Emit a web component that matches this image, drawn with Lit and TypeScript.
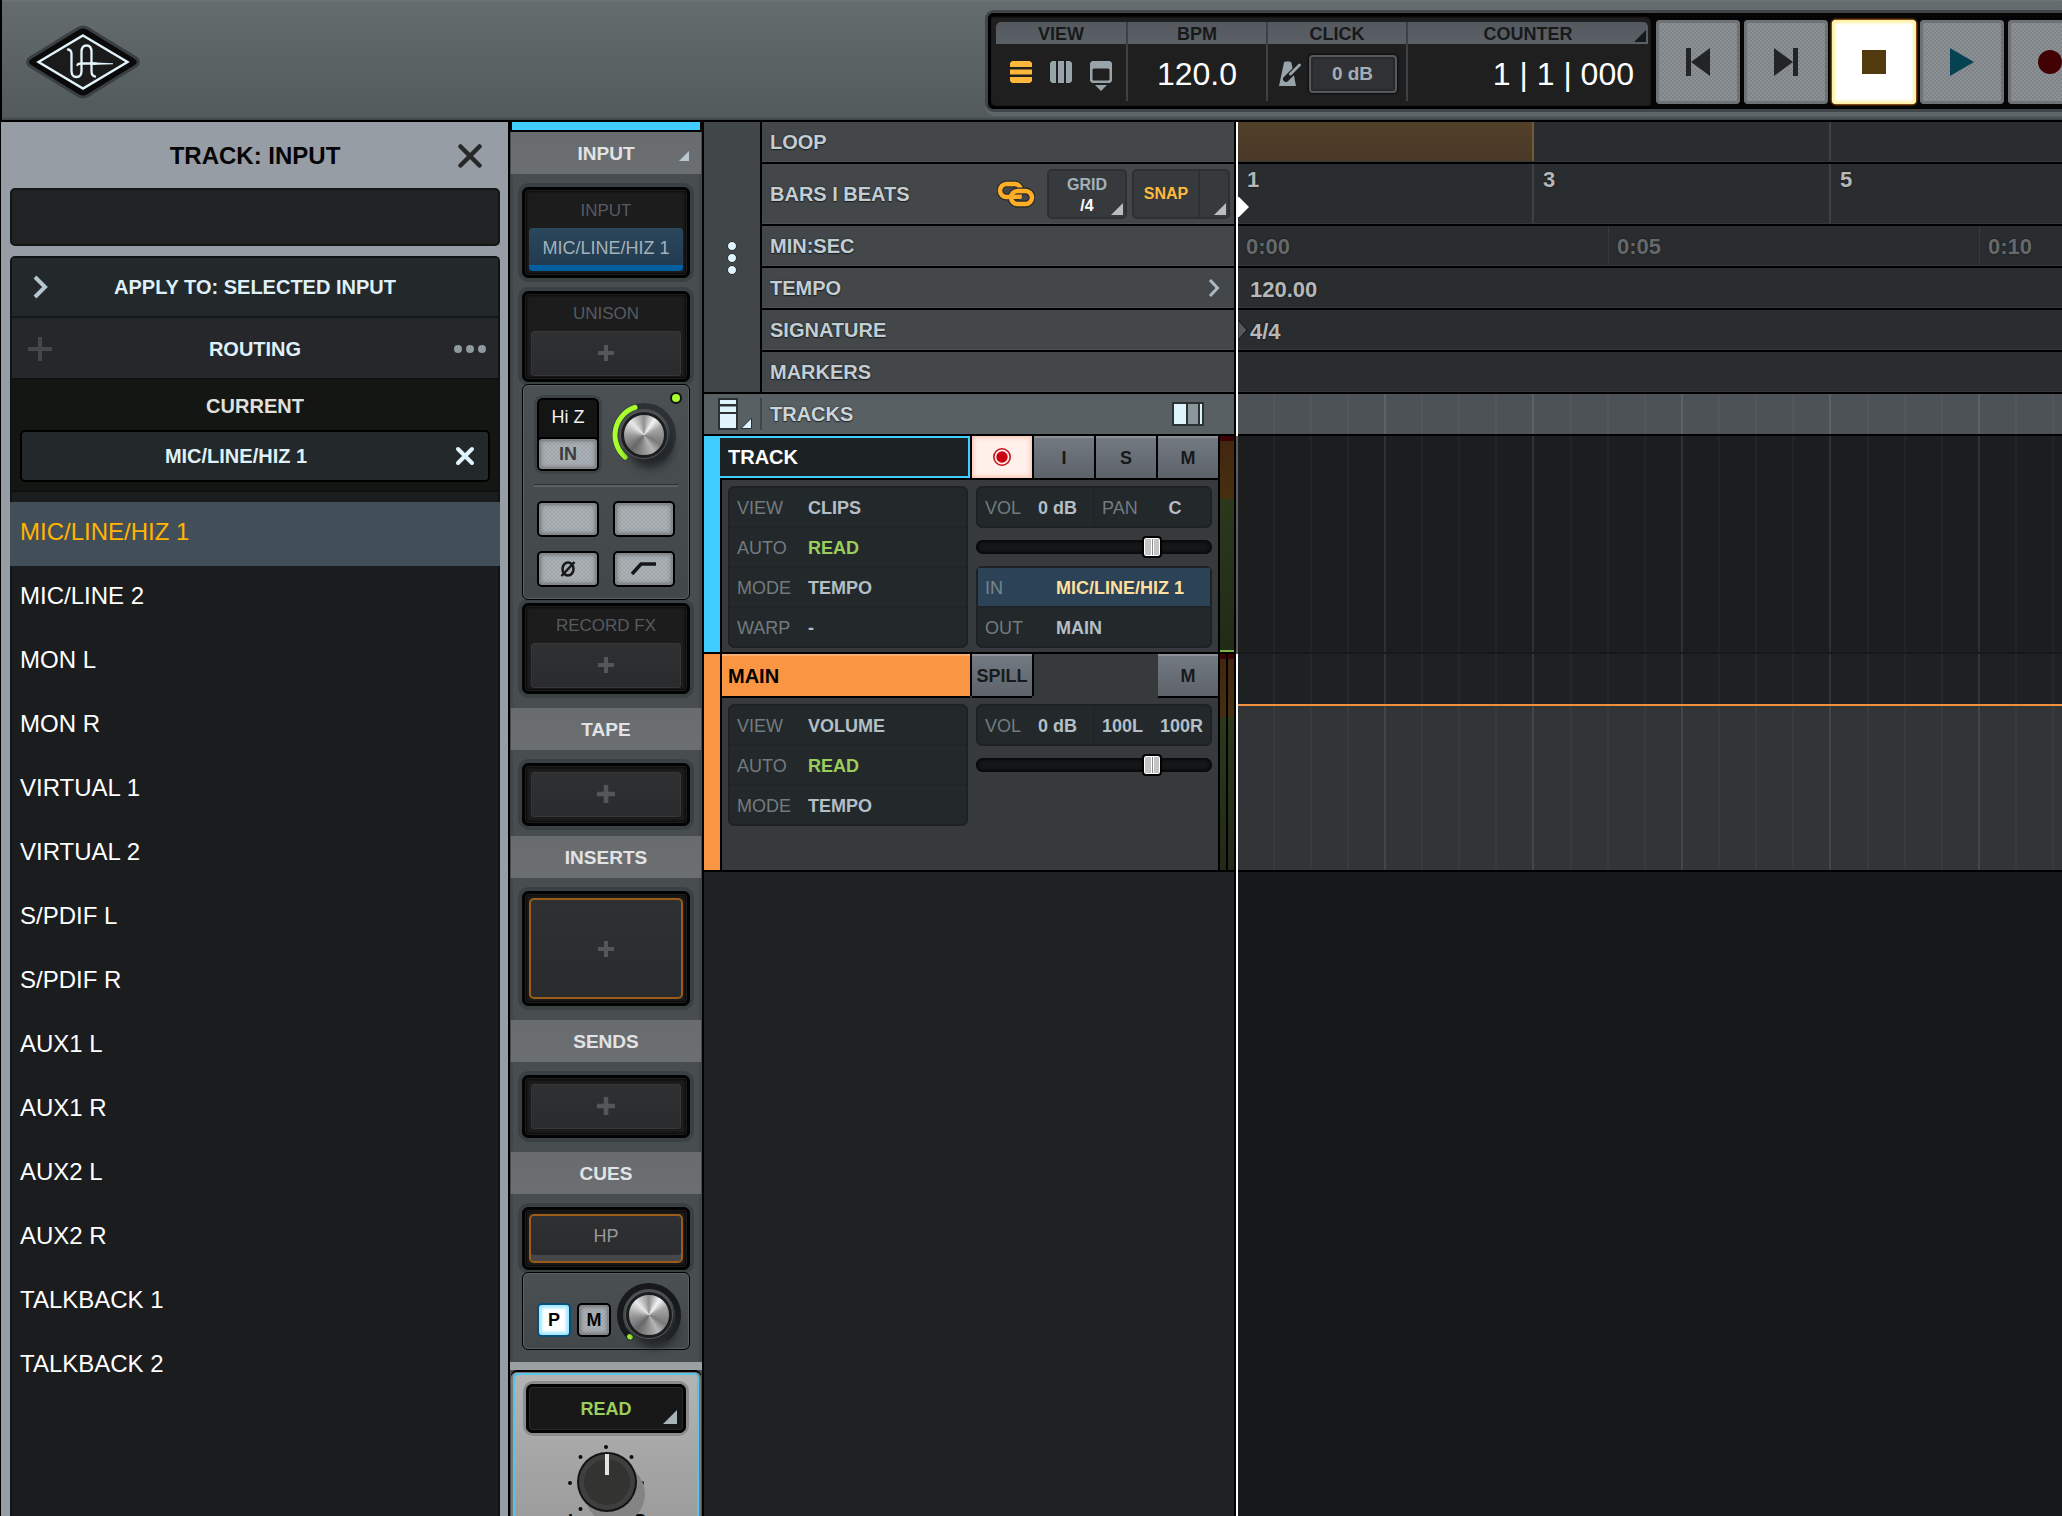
import { LitElement, html, css, nothing } from "lit";
import { customElement, property } from "lit/decorators.js";
import { classMap } from "lit/directives/class-map.js";

const base = css`
  :host {
    display: block;
    box-sizing: border-box;
    font-family: "Liberation Sans", Arial, Helvetica, sans-serif;
  }
  *,
  *::before,
  *::after {
    box-sizing: border-box;
  }
  button,
  input {
    font: inherit;
    color: inherit;
    background: none;
    border: 0;
    border-radius: 0;
    margin: 0;
    padding: 0;
    outline: none;
  }
  button {
    cursor: pointer;
  }
  svg {
    display: block;
    flex: none;
  }
`;

const metal = css`
  .metal {
    display: flex;
    align-items: center;
    justify-content: center;
    background:
      linear-gradient(#a5adb3, #a5adb3) center top / 14px 3px no-repeat,
      linear-gradient(#a5adb3, #a5adb3) center bottom / 14px 3px no-repeat,
      repeating-conic-gradient(#a0a5a9 0 25%, #abb3b9 0 50%) 0 0 / 4px 4px;
    border: 2px solid #000;
    border-radius: 5px;
    box-shadow: inset 0 0 0 2px #85888b, inset 0 0 4px 2px #777b7e;
    color: #2f3133;
    font-weight: 700;
    font-size: 18px;
    line-height: 20px;
  }
`;

/* ---------- Header ---------- */

@customElement("ua-header")
class UaHeader extends LitElement {
  static styles = [
    base,
    css`
      .bar {
        display: flex;
        align-items: flex-start;
        height: 122px;
        overflow: hidden;
        border-left: 2px solid #000;
        border-bottom: 2px solid #000;
        background: linear-gradient(#72797b 0, #656c6e 2px, #535a5c 117px, #3c4244 120px);
      }
      .logo {
        margin: 24px 0 0 22px;
      }
      .gap {
        flex: 0 0 846px;
      }
      .console {
        display: flex;
        flex: none;
        margin-top: 13px;
        height: 96px;
        border-radius: 6px;
        background: #050505;
        box-shadow: 0 0 0 3px #3f4548, 0 4px 0 3px #5f6669;
      }
      .display {
        display: flex;
        padding: 9px 4px 8px 8px;
        border-radius: 6px;
        background: #1f1f20;
        box-shadow: inset 0 3px 2px 1px #000, inset 2px -2px 1px 1px #000;
        margin-right: 4px;
      }
      .cell {
        display: flex;
        flex-direction: column;
        width: 138px;
        margin-right: 2px;
        box-shadow: 2px 0 0 #3c4144;
      }
      .cell.view {
        width: 130px;
      }
      .cell.counter {
        width: 240px;
        margin-right: 0;
        box-shadow: none;
      }
      .cap {
        display: flex;
        align-items: center;
        justify-content: center;
        height: 22px;
        padding-top: 2px;
        background: linear-gradient(#54595f, #5b6067);
        color: #17191b;
        font-size: 18px;
        line-height: 20px;
        font-weight: 700;
      }
      .view .cap {
        border-radius: 5px 0 0 0;
      }
      .counter .cap {
        position: relative;
        border-radius: 0 5px 0 0;
      }
      .corner {
        position: absolute;
        right: 2px;
        bottom: 2px;
      }
      .val {
        display: flex;
        align-items: center;
        justify-content: center;
        gap: 7px;
        height: 56px;
        padding-top: 4px;
        color: #fff;
        font-size: 32px;
        line-height: 36px;
      }
      .view .val {
        align-items: flex-start;
        gap: 18px;
        padding-top: 17px;
      }
      .view .val button {
        width: 22px;
        height: 31px;
        display: flex;
        align-items: flex-start;
      }
      .counter .val {
        justify-content: flex-end;
        padding-right: 14px;
      }
      .db {
        width: 88px;
        height: 38px;
        border: 2px solid #55595c;
        border-radius: 4px;
        background: #2f3133;
        box-shadow: 0 0 2px 1px #0c0c0c, inset 0 0 0 2px #27292b;
        color: #a3adb3;
        font-size: 19px;
        line-height: 20px;
        font-weight: 700;
      }
      .transport {
        display: flex;
        gap: 4px;
        padding-top: 7px;
      }
      .key {
        display: flex;
        align-items: center;
        justify-content: center;
        width: 84px;
        height: 84px;
        border-radius: 4px;
        background:
          linear-gradient(#999fa3, #999fa3) center top / 16px 3px no-repeat,
          linear-gradient(#999fa3, #999fa3) center bottom / 16px 3px no-repeat,
          repeating-conic-gradient(#7e8387 0 25%, #8b9195 0 50%) 0 0 / 4px 4px;
        box-shadow: inset 0 0 0 3px #6f7376, inset 0 2px 0 0 #8e9296;
      }
      .key.on {
        background: #fff;
        box-shadow: inset 0 0 3px 3px #fff2a8, 0 0 2px 1px #b0601a;
      }
    `,
  ];

  render() {
    return html`
      <header class="bar">
        <svg class="logo" width="118" height="76" viewBox="0 0 118 76" role="img" aria-label="Universal Audio">
          <path d="M54 4.500Q59 1.500 64 4.500L112 34Q117 38 112 42L64 71.500Q59 74.500 54 71.500L6 42Q1 38 6 34Z" fill="#0a0a0a" stroke="#3a4042" stroke-width="3" />
          <path d="M59 11.500L103.500 38L59 64.500L14.500 38Z" fill="#1b1b1b" stroke="#e3f4fb" stroke-width="2.400" />
          <g fill="none" stroke="#e3f4fb" stroke-width="2.300" stroke-linecap="round">
            <path d="M44 25.500Q47.500 26 47.500 30V47Q47.500 53 52.500 53Q57.500 53 57.500 47V28Q57.500 21.500 62.500 21.500Q67.500 21.500 67.500 28V47Q67.500 52 71 52.500" />
            <path d="M53.500 41Q54 39.500 58 39.500H72" />
          </g>
          <path d="M66 38.300L89 39.300V40.200L66 41Z" fill="#e3f4fb" />
        </svg>
        <div class="gap"></div>
        <div class="console">
          <div class="display">
            <div class="cell view">
              <div class="cap">VIEW</div>
              <div class="val">
                <button aria-label="Tracks view">
                  <svg width="22" height="22" viewBox="0 0 22 22">
                    <path d="M2 0H20L22 2V6H0V2ZM0 8.500H22V13.500H0ZM0 16H22V20L20 22H2L0 20Z" fill="#ffb83c" />
                  </svg>
                </button>
                <button aria-label="Mixer view">
                  <svg width="22" height="22" viewBox="0 0 22 22">
                    <path d="M2 0H6V22H2L0 20V2ZM8 0H14V22H8ZM16 0H20L22 2V20L20 22H16Z" fill="#98a4aa" />
                  </svg>
                </button>
                <button aria-label="Window view">
                  <svg width="22" height="31" viewBox="0 0 22 31">
                    <path d="M2 0H20L22 2V20L20 22H2L0 20V2ZM2.500 9V18Q2.500 19.500 4 19.500H18Q19.500 19.500 19.500 18V9Q19.500 7.500 18 7.500H4Q2.500 7.500 2.500 9Z" fill="#98a4aa" fill-rule="evenodd" />
                    <path d="M5 24H17L11 30Z" fill="#98a4aa" />
                  </svg>
                </button>
              </div>
            </div>
            <div class="cell">
              <div class="cap">BPM</div>
              <div class="val">120.0</div>
            </div>
            <div class="cell">
              <div class="cap">CLICK</div>
              <div class="val">
                <svg width="24" height="26" viewBox="0 0 24 26">
                  <path d="M6 1.500Q6.500 0.500 8 0.500H11.500Q13 0.500 13.500 2L18 25H1Z" fill="#98a4aa" />
                  <path d="M8 18L22 4" stroke="#1c1c1d" stroke-width="6" stroke-linecap="round" />
                  <path d="M12.500 13L21.500 4" stroke="#98a4aa" stroke-width="3" stroke-linecap="round" />
                </svg>
                <button class="db">0 dB</button>
              </div>
            </div>
            <div class="cell counter">
              <div class="cap">
                COUNTER
                <svg class="corner" width="12" height="12" viewBox="0 0 12 12"><path d="M12 0V12H0Z" fill="#17191b" /></svg>
              </div>
              <div class="val">1 | 1 | 000</div>
            </div>
          </div>
          <div class="transport">
            <button class="key" aria-label="Previous">
              <svg width="28" height="28" viewBox="0 0 28 28"><path d="M2 0H7V14L26 0V28L7 14V28H2Z" fill="#222426" /></svg>
            </button>
            <button class="key" aria-label="Next">
              <svg width="28" height="28" viewBox="0 0 28 28"><path d="M26 0H21V14L2 0V28L21 14V28H26Z" fill="#222426" /></svg>
            </button>
            <button class="key on" aria-label="Stop">
              <svg width="24" height="24" viewBox="0 0 24 24"><path d="M0 0H24V24H0Z" fill="#503a0e" /></svg>
            </button>
            <button class="key" aria-label="Play">
              <svg width="24" height="28" viewBox="0 0 24 28"><path d="M0 0L24 14L0 28Z" fill="#064352" /></svg>
            </button>
            <button class="key" aria-label="Record">
              <svg width="24" height="24" viewBox="0 0 24 24"><circle cx="12" cy="12" r="12" fill="#420203" /></svg>
            </button>
          </div>
        </div>
      </header>
    `;
  }
}

/* ---------- Routing browser ---------- */

const INPUTS = [
  "MIC/LINE/HIZ 1",
  "MIC/LINE 2",
  "MON L",
  "MON R",
  "VIRTUAL 1",
  "VIRTUAL 2",
  "S/PDIF L",
  "S/PDIF R",
  "AUX1 L",
  "AUX1 R",
  "AUX2 L",
  "AUX2 R",
  "TALKBACK 1",
  "TALKBACK 2",
];

@customElement("ua-browser")
class UaBrowser extends LitElement {
  @property() selected = INPUTS[0];

  static styles = [
    base,
    css`
      :host {
        display: flex;
        border-left: 1px solid #000;
        border-right: 2px solid #000;
        min-height: 0;
      }
      .panel {
        flex: 1;
        display: flex;
        flex-direction: column;
        padding: 0 8px 0 9px;
        background: #979da4;
        overflow: hidden;
      }
      .row {
        display: grid;
        grid-template-columns: 56px 1fr 56px;
        align-items: center;
        justify-items: center;
        font-size: 20px;
        line-height: 24px;
        font-weight: 700;
        color: #dff0f8;
      }
      .title {
        height: 66px;
        flex: none;
        padding-top: 2px;
        font-size: 24px;
        line-height: 28px;
        color: #050505;
      }
      .title h1 {
        margin: 0;
        font: inherit;
      }
      .title button {
        padding-right: 4px;
      }
      .search {
        flex: none;
        width: 100%;
        height: 58px;
        margin-bottom: 10px;
        padding: 0 12px;
        background: #212224;
        border: 2px solid #121715;
        border-radius: 5px;
        color: #fff;
        font-size: 24px;
      }
      .box {
        flex: 1;
        border: 2px solid #101315;
        border-bottom: 0;
        border-radius: 5px 5px 0 0;
        background: #1b1c1e;
      }
      .apply {
        height: 60px;
        width: 100%;
        background: #23282b;
        border-bottom: 2px solid #14181a;
      }
      .routing {
        height: 62px;
        padding-top: 2px;
        background: #25272b;
        border-bottom: 2px solid #0e1110;
      }
      .current {
        height: 112px;
        padding: 14px 8px 10px;
        background: #141614;
        border-bottom: 2px solid #0e100f;
        color: #e0e0de;
        font-size: 20px;
        line-height: 24px;
        font-weight: 700;
        text-align: center;
      }
      .chip {
        display: grid;
        grid-template-columns: 1fr 46px;
        align-items: center;
        justify-items: center;
        height: 52px;
        margin-top: 12px;
        border: 2px solid #000;
        border-radius: 5px;
        background: #23282b;
        color: #dff0f8;
      }
      .chip span {
        padding-left: 8px;
      }
      ul {
        list-style: none;
        margin: 10px -2px 0;
        padding: 0;
      }
      .item {
        display: block;
        width: 100%;
        height: 64px;
        padding: 0 10px 5px;
        text-align: left;
        color: #fff;
        font-size: 24px;
        line-height: 28px;
      }
      .item.on {
        background: #434f58;
        color: #ffb400;
      }
    `,
  ];

  render() {
    return html`
      <section class="panel">
        <div class="row title">
          <span></span>
          <h1>TRACK: INPUT</h1>
          <button aria-label="Close">
            <svg width="26" height="24" viewBox="0 0 26 24"><path d="M3.500 2.500L22.500 21.500M22.500 2.500L3.500 21.500" stroke="#26282a" stroke-width="4.500" stroke-linecap="round" /></svg>
          </button>
        </div>
        <input class="search" type="text" aria-label="Search inputs" />
        <div class="box">
          <button class="row apply">
            <svg width="18" height="24" viewBox="0 0 18 24"><path d="M4 2L14 12L4 22" fill="none" stroke="#b5c6ce" stroke-width="4" /></svg>
            <span>APPLY TO: SELECTED INPUT</span>
            <span></span>
          </button>
          <div class="row routing">
            <button aria-label="Add preset">
              <svg width="24" height="24" viewBox="0 0 24 24"><path d="M10 0H14V10H24V14H14V24H10V14H0V10H10Z" fill="#44484b" /></svg>
            </button>
            <span>ROUTING</span>
            <button aria-label="More">
              <svg width="32" height="10" viewBox="0 0 32 10"><g fill="#8d9ba1"><circle cx="4" cy="5" r="4" /><circle cx="16" cy="5" r="4" /><circle cx="28" cy="5" r="4" /></g></svg>
            </button>
          </div>
          <div class="current">
            CURRENT
            <div class="chip">
              <span>${this.selected}</span>
              <button aria-label="Clear input">
                <svg width="20" height="20" viewBox="0 0 20 20"><path d="M3 3L17 17M17 3L3 17" stroke="#dff4fc" stroke-width="4" stroke-linecap="round" /></svg>
              </button>
            </div>
          </div>
          <ul>
            ${INPUTS.map(
              (name) => html`<li>
                <button
                  class=${classMap({ item: true, on: name === this.selected })}
                  @click=${() => (this.selected = name)}
                >
                  ${name}
                </button>
              </li>`
            )}
          </ul>
        </div>
      </section>
    `;
  }
}

/* ---------- Knob ---------- */

const polar = (deg: number, r: number) => {
  const a = ((deg - 90) * Math.PI) / 180;
  return `${(32 + r * Math.cos(a)).toFixed(2)} ${(32 + r * Math.sin(a)).toFixed(2)}`;
};
const arc = (from: number, to: number, r: number) =>
  `M${polar(from, r)}A${r} ${r} 0 ${to - from > 180 ? 1 : 0} 1 ${polar(to, r)}`;

@customElement("ua-knob")
class UaKnob extends LitElement {
  @property({ type: Number }) angle = -20;
  @property() label = "";
  @property() track = "#2d3135";

  static styles = [
    base,
    css`
      :host {
        display: grid;
        width: 64px;
        height: 64px;
        place-items: center;
      }
      :host > * {
        grid-area: 1 / 1;
      }
      svg,
      .face,
      input {
        grid-area: 1 / 1;
      }
      svg {
        overflow: visible;
      }
      .face {
        width: 46px;
        height: 46px;
        border-radius: 50%;
        border: 3px solid #1c1d1f;
        background: conic-gradient(
          #8f8f8f,
          #f4f4f4 35deg,
          #a5a5a5 65deg,
          #7a7a7a 120deg,
          #b5b5b5 150deg,
          #878787 190deg,
          #686868 220deg,
          #9c9c9c 270deg,
          #e8e8e8 315deg,
          #8f8f8f
        );
        box-shadow: 0 0 0 1px #55585b, 6px 10px 9px 0 #23272a;
      }
      input {
        width: 46px;
        height: 46px;
        opacity: 0;
      }
    `,
  ];

  render() {
    return html`
      <svg width="64" height="64" viewBox="0 0 64 64">
        <path d=${arc(-140, 140, 29)} fill="none" stroke=${this.track} stroke-width="6" stroke-linecap="round" />
        <path d=${arc(-140, this.angle, 29)} fill="none" stroke="#a8ff2c" stroke-width="5" stroke-linecap="round" />
      </svg>
      <div class="face"></div>
      <input type="range" min="-140" max="140" .value=${String(this.angle)} aria-label=${this.label} />
    `;
  }
}

/* ---------- Channel strip ---------- */

const plus = (size = 16) => html`
  <svg width=${size} height=${size} viewBox="0 0 16 16"><path d="M6 0H10V6H16V10H10V16H6V10H0V6H6Z" fill="#54575a" /></svg>
`;

@customElement("ua-strip")
class UaStrip extends LitElement {
  static styles = [
    base,
    metal,
    css`
      :host {
        display: flex;
        flex-direction: column;
        min-height: 0;
        overflow: hidden;
        border-right: 2px solid #000;
        background: #484d50;
      }
      :host > * {
        flex: none;
      }
      .tint {
        height: 10px;
        border: solid #000;
        border-width: 0 2px 2px;
        background: #40cdff;
      }
      h2 {
        display: flex;
        flex: none;
        align-items: center;
        justify-content: center;
        position: relative;
        height: 42px;
        margin: 0 1px;
        padding-top: 2px;
        background: linear-gradient(#696c6f, #6c6f72);
        color: #e2e3e4;
        font-size: 19px;
        line-height: 22px;
        font-weight: 700;
      }
      .corner {
        position: absolute;
        right: 12px;
        bottom: 13px;
      }
      section {
        display: flex;
        flex: none;
        flex-direction: column;
        padding: 13px 12px 14px;
        box-shadow: inset 3px 0 0 #414649, inset -3px 0 0 #414649;
      }
      .tape {
        padding-bottom: 10px;
      }
      .well {
        display: flex;
        flex-direction: column;
        height: 91px;
        padding: 6px 9px;
        border-radius: 7px;
        background: #1c1c1d;
        box-shadow: inset 0 0 0 3px #030303, inset 0 0 0 4px #1d1d1e, inset 0 0 2px 5px #0a0a0a, 0 0 0 4px #3b4043;
      }
      .well + .well {
        margin-top: 13px;
      }
      .well.single {
        height: 63px;
        padding: 9px;
      }
      .well.lit {
        padding: 7px;
      }
      .well.tall {
        height: 115px;
      }
      .cap {
        flex: none;
        height: 34px;
        color: #565b5f;
        font-size: 17px;
        line-height: 34px;
        text-align: center;
      }
      .slot {
        display: flex;
        flex: 1;
        align-items: center;
        justify-content: center;
        padding-bottom: 2px;
        border: 1px solid #363739;
        border-radius: 3px;
        background: linear-gradient(#2f3031, #292b2c);
        color: #999;
        font-size: 18px;
        line-height: 20px;
      }
      .slot.source {
        padding: 2px 0 0;
        border: 0;
        border-bottom: 6px solid #035f9f;
        border-radius: 4px;
        background: linear-gradient(#2b475c, #223b50);
        color: #a5b1b9;
      }
      .slot.orange {
        padding-bottom: 0;
        border: 2px solid #9a5c17;
        border-radius: 5px;
      }
      .slot.cue {
        box-shadow: inset 0 -6px 0 #47474a;
        padding-bottom: 6px;
      }
      .panel {
        position: relative;
        margin-top: 2px;
        border: 1px solid #000;
        border-radius: 6px;
        background: linear-gradient(#4b5053, #42474a);
        box-shadow: inset 0 0 0 1px #5c6164;
      }
      .preamp {
        height: 216px;
        margin-bottom: 3px;
        padding: 13px 14px;
      }
      .top {
        display: grid;
        grid-template-columns: 62px 62px;
        gap: 14px;
        align-items: center;
        justify-items: center;
      }
      .hiz {
        display: flex;
        flex-direction: column;
        justify-content: space-between;
        align-items: stretch;
        width: 62px;
        height: 73px;
        border-radius: 6px;
        background: #131414;
        box-shadow: inset 0 0 0 2px #000, 0 0 0 3px #3d4245;
        color: #f2f2f2;
        font-size: 18px;
        line-height: 39px;
        text-align: center;
      }
      .hiz .metal {
        height: 34px;
        color: #3b3d3f;
      }
      .led {
        position: absolute;
        right: 7px;
        top: 7px;
        width: 12px;
        height: 12px;
        border: 2px solid #111;
        border-radius: 50%;
        background: #a8ff2c;
      }
      .rule {
        height: 3px;
        margin: 13px -3px 14px;
        background: #5c6164;
        border-top: 1px solid #2c3033;
      }
      .grid {
        display: grid;
        grid-template-columns: 62px 62px;
        gap: 14px;
      }
      .grid .metal {
        height: 36px;
      }
      .cuepanel {
        display: flex;
        gap: 6px;
        height: 78px;
        padding: 10px 8px 0 14px;
      }
      .sq {
        width: 34px;
        height: 34px;
        margin-top: 20px;
        color: #050505;
      }
      .sq.on {
        background: #fff;
        border-color: #0a4f7c;
        box-shadow: inset 0 0 3px 3px #9eeaff;
      }
      .ledge {
        flex: none;
        height: 8px;
        margin-top: -2px;
        background: #9ba0a2;
      }
      .fader {
        flex: 1;
        min-height: 0;
        display: flex;
        flex-direction: column;
        align-items: center;
        margin: 2px 1px 0;
        padding-top: 11px;
        overflow: hidden;
        border: solid #787878;
        border-width: 1px 2px 0;
        border-radius: 6px 6px 0 0;
        background: linear-gradient(#b4b4b4, #989898 170px);
        box-shadow: inset 2px 2px 0 #57c4e8, inset -2px 0 0 #57c4e8, 0 -2px 0 #000;
      }
      .auto {
        flex: none;
        position: relative;
        width: 160px;
        height: 49px;
        border-radius: 7px;
        background: #171718;
        box-shadow: inset 0 0 0 3px #030303, inset 0 0 0 4px #2a2a2b, 0 0 0 3px #8c8c8c;
        color: #9bcd5c;
        font-size: 18px;
        line-height: 20px;
        font-weight: 700;
      }
      .auto svg {
        position: absolute;
        right: 9px;
        bottom: 9px;
      }
      .pan {
        flex: none;
        margin-top: 7px;
      }
      .pan text {
        font: 700 18px "Liberation Sans", Arial, sans-serif;
      }
    `,
  ];

  render() {
    return html`
      <div class="tint"></div>
      <h2>
        INPUT
        <svg class="corner" width="10" height="10" viewBox="0 0 10 10"><path d="M10 0V10H0Z" fill="#b9c7ce" /></svg>
      </h2>
      <section>
        <div class="well lit">
          <div class="cap">INPUT</div>
          <button class="slot source">MIC/LINE/HIZ 1</button>
        </div>
        <div class="well">
          <div class="cap">UNISON</div>
          <button class="slot" aria-label="Add Unison plug-in">${plus()}</button>
        </div>
        <div class="panel preamp">
          <span class="led"></span>
          <div class="top">
            <div class="hiz">
              Hi Z
              <button class="metal">IN</button>
            </div>
            <ua-knob label="Preamp gain" angle="-18"></ua-knob>
          </div>
          <div class="rule"></div>
          <div class="grid">
            <button class="metal" aria-label="48V"></button>
            <button class="metal" aria-label="Pad"></button>
            <button class="metal" aria-label="Polarity">
              <svg width="16" height="18" viewBox="0 0 16 18"><g fill="none" stroke="#161718" stroke-width="2.500"><ellipse cx="8" cy="9" rx="5.500" ry="6.500" /><path d="M1.500 16L14.500 2" /></g></svg>
            </button>
            <button class="metal" aria-label="Low cut">
              <svg width="28" height="16" viewBox="0 0 28 16"><path d="M2 13L11 3H26" fill="none" stroke="#161718" stroke-width="3.500" /></svg>
            </button>
          </div>
        </div>
        <div class="well">
          <div class="cap">RECORD FX</div>
          <button class="slot" aria-label="Add record effect">${plus()}</button>
        </div>
      </section>

      <h2>TAPE</h2>
      <section class="tape">
        <div class="well single"><button class="slot" aria-label="Add tape">${plus(18)}</button></div>
      </section>

      <h2>INSERTS</h2>
      <section>
        <div class="well lit tall"><button class="slot orange" aria-label="Add insert">${plus()}</button></div>
      </section>

      <h2>SENDS</h2>
      <section>
        <div class="well single"><button class="slot" aria-label="Add send">${plus(18)}</button></div>
      </section>

      <h2>CUES</h2>
      <section>
        <div class="well single lit"><button class="slot orange cue">HP</button></div>
        <div class="panel cuepanel">
          <button class="metal sq on">P</button>
          <button class="metal sq">M</button>
          <ua-knob label="Cue level" angle="-138" track="#17191b"></ua-knob>
        </div>
      </section>

      <div class="ledge"></div>
      <div class="fader">
        <button class="auto">
          READ
          <svg width="14" height="14" viewBox="0 0 14 14"><path d="M14 0V14H0Z" fill="#a9b4ba" /></svg>
        </button>
        <svg class="pan" width="90" height="92" viewBox="0 0 90 92" role="img" aria-label="Pan">
          <g fill="#0c0c0c">
            <circle cx="45" cy="7" r="2" /><circle cx="19.500" cy="17" r="2" /><circle cx="70.500" cy="17" r="2" />
            <circle cx="9" cy="43" r="2" /><circle cx="81" cy="43" r="2" /><circle cx="19.500" cy="69" r="2" /><circle cx="70.500" cy="69" r="2" />
            <text x="7" y="87">L</text><text x="72" y="87">R</text>
          </g>
          <circle cx="54" cy="54" r="30" fill="#848484" />
          <circle cx="46" cy="42" r="30" fill="#141414" />
          <circle cx="46" cy="42" r="28" fill="#3f3f3e" />
          <circle cx="46" cy="42" r="23" fill="#333332" />
          <path d="M44 14H48V35H44Z" fill="#e4e4e4" />
        </svg>
      </div>
    `;
  }
}

/* ---------- Arranger ---------- */

type Field = { label: string; value: string; auto?: boolean };
type Track = {
  name: string;
  kind: "audio" | "main";
  fields: Field[];
  pan: string[];
};

const TRACKS: Track[] = [
  {
    name: "TRACK",
    kind: "audio",
    fields: [
      { label: "VIEW", value: "CLIPS" },
      { label: "AUTO", value: "READ", auto: true },
      { label: "MODE", value: "TEMPO" },
      { label: "WARP", value: "-" },
    ],
    pan: ["C"],
  },
  {
    name: "MAIN",
    kind: "main",
    fields: [
      { label: "VIEW", value: "VOLUME" },
      { label: "AUTO", value: "READ", auto: true },
      { label: "MODE", value: "TEMPO" },
    ],
    pan: ["100L", "100R"],
  },
];

@customElement("ua-arranger")
class UaArranger extends LitElement {
  static styles = [
    base,
    css`
      :host {
        display: grid;
        grid-template-columns: 532px 2px 1fr;
        min-height: 0;
        min-width: 0;
        overflow: hidden;
        background: #000;
      }
      .heads,
      .time,
      .cursor {
        display: flex;
        flex-direction: column;
        min-width: 0;
        min-height: 0;
      }
      .heads {
        border-right: 2px solid #000;
      }

      /* ruler names */
      .rulers {
        display: grid;
        grid-template-columns: 56px 1fr;
        gap: 2px;
      }
      .menu {
        display: flex;
        align-items: center;
        justify-content: center;
        padding-top: 2px;
        background: #414649;
      }
      .names {
        display: grid;
        grid-template-rows: 40px 60px 40px 40px 40px 40px;
        gap: 2px;
      }
      .name {
        display: flex;
        align-items: center;
        padding: 0 4px 0 8px;
        background: #434749;
        border-bottom: 1px solid #4b5052;
        color: #c3ced3;
        font-size: 20px;
        line-height: 24px;
        font-weight: 700;
        text-shadow: 0 0 2px #1e2123, 0 1px 1px #1e2123;
      }
      .name .grow {
        flex: 1;
      }
      .bars {
        gap: 5px;
      }
      .bars svg.link {
        margin-right: 7px;
      }
      .pad {
        position: relative;
        flex: none;
        width: 80px;
        height: 50px;
        padding: 2px 0 0;
        border: 2px solid #2d3032;
        border-radius: 5px;
        background: #373a3c;
        color: #a3b1b8;
        font-size: 16px;
        line-height: 21px;
        font-weight: 700;
      }
      .pad b {
        display: block;
        color: #fff;
      }
      .pad svg {
        position: absolute;
        right: 2px;
        bottom: 2px;
      }
      .snap {
        width: 98px;
        padding: 0 30px 0 0;
        color: #ffb93c;
        background: linear-gradient(#2d3032, #2d3032) 64px 0 / 2px 100% no-repeat, #373a3c;
      }
      .go {
        margin-right: 10px;
      }

      .tracksbar {
        display: grid;
        grid-template-columns: 58px 1fr auto;
        align-items: center;
        height: 44px;
        border: solid #000;
        border-width: 2px 0;
        background: #596063;
        color: #cbd6da;
        font-size: 20px;
        line-height: 24px;
        font-weight: 700;
        text-shadow: 0 0 2px #25292b, 0 1px 1px #25292b;
      }
      .tracksbar .sort {
        display: flex;
        align-items: flex-end;
        height: 32px;
        padding-left: 14px;
        border-right: 2px solid #3f4548;
      }
      .tracksbar .t {
        padding-left: 8px;
      }
      .tracksbar .cols {
        margin-right: 30px;
      }

      /* track headers */
      .track {
        display: grid;
        grid-template-columns: 16px 1fr 14px;
        grid-template-rows: 216px;
        column-gap: 2px;
        margin-bottom: 2px;
      }
      .tab {
        background: #40cdff;
      }
      .main .tab {
        background: #fa9643;
      }
      .body {
        background: #363a3c;
        min-width: 0;
      }
      .strip {
        display: grid;
        grid-template-columns: 248px repeat(4, 60px);
        gap: 2px;
        height: 44px;
        padding-bottom: 2px;
      }
      .audio .strip {
        background: #000;
      }
      .title {
        width: 250px;
        min-width: 0;
        margin-left: -2px;
        padding: 0 0 0 8px;
        border: 2px solid #40cdff;
        border-left: 0;
        background: #1c2224;
        color: #fff;
        font-size: 20px;
        line-height: 24px;
        font-weight: 700;
      }
      .main .title {
        width: 248px;
        margin-left: 0;
        padding-left: 6px;
        border: 0;
        border-top: 2px solid #fcb070;
        background: #fa9643;
        color: #000;
        box-shadow: 0 2px 0 #000, 2px 0 0 #000;
      }
      .btn {
        display: flex;
        align-items: center;
        justify-content: center;
        background: linear-gradient(#727981, #5d6369);
        border-top: 2px solid #8a9199;
        color: #17191b;
        font-size: 18px;
        line-height: 20px;
        font-weight: 700;
        box-shadow: 0 2px 0 #000, 2px 0 0 #000;
      }
      .btn.rec {
        border: 0;
        background: #fff0eb;
        box-shadow: inset 0 0 5px 1px #fcb9a8;
      }
      .skip {
        grid-column: span 2;
      }
      .detail {
        display: grid;
        grid-template-columns: 240px 236px;
        gap: 8px;
        align-items: start;
        padding: 6px 6px 0;
      }
      .fields {
        border: 2px solid #1d2123;
        border-radius: 6px;
        background: #23282b;
        font-size: 18px;
        line-height: 20px;
      }
      .field {
        display: flex;
        align-items: center;
        width: 100%;
        height: 40px;
        padding: 2px 0 0 7px;
        text-align: left;
        font-weight: 700;
        color: #b3bec5;
        border-bottom: 2px solid #1f2427;
      }
      .field:last-child {
        height: 38px;
        border-bottom: 0;
      }
      .field span {
        flex: none;
        width: 71px;
        color: #727b7f;
        font-weight: 400;
      }
      .field.auto {
        color: #9bcd5c;
      }
      .io .lit {
        background: #2c4357;
        color: #ffdf9c;
      }
      .io .lit span {
        color: #76858e;
      }
      .right {
        display: flex;
        flex-direction: column;
        gap: 12px;
      }
      .levels {
        display: grid;
        grid-template-columns: 117px 1fr;
        height: 42px;
        border: 2px solid #1d2123;
        border-radius: 6px;
        background: linear-gradient(#1f2427, #1f2427) 115px 0 / 2px 100% no-repeat, #23282b;
        color: #b3bec5;
        font-size: 18px;
        line-height: 20px;
        font-weight: 700;
      }
      .levels div {
        display: flex;
        align-items: center;
        padding: 2px 7px 0;
      }
      .levels span {
        width: 53px;
        color: #727b7f;
        font-weight: 400;
      }
      .levels .vol {
        padding-right: 0;
      }
      .levels .stereo {
        justify-content: space-between;
      }
      .levels .mono button {
        flex: 1;
        padding-right: 8px;
      }
      .fader {
        -webkit-appearance: none;
        appearance: none;
        display: block;
        width: 236px;
        height: 14px;
        border-radius: 7px;
        background: #141617;
        box-shadow: inset 0 0 3px 2px #08090a;
      }
      .fader::-webkit-slider-thumb {
        -webkit-appearance: none;
        width: 20px;
        height: 22px;
        border: 2px solid #000;
        border-radius: 4px;
        background:
          linear-gradient(90deg, #fff 0 1px, #8b8b8b 1px 2px, #fff 2px 3px) center / 3px 100% no-repeat,
          #c4c4c4;
        box-shadow: inset 0 0 0 1px #fff;
      }
      .meter {
        display: grid;
        grid-auto-flow: column;
        gap: 2px;
      }
      .meter i {
        background: linear-gradient(#3b0307 5px, #43260f 5px, #45300f 63px, #2b381b 63px, #212a18);
      }
      .audio .meter i {
        border-bottom: 2px solid #7fae4c;
      }
      .void {
        flex: 1;
        background: #202122;
      }

      /* playhead */
      .cursor {
        background: #fff;
      }
      .cursor .dim {
        height: 218px;
        margin-top: 314px;
        background: #5c5d5e;
      }

      /* timeline */
      .lines {
        display: grid;
        grid-template-rows: 40px 60px 40px 40px 40px 40px;
        gap: 2px;
      }
      .ruler {
        display: flex;
        align-items: center;
        position: relative;
        overflow: hidden;
        background: #2a2d2f;
        border-bottom: 1px solid #34383a;
        color: #b5b7b8;
        font-size: 22px;
        line-height: 26px;
        font-weight: 700;
        text-shadow: 0 0 2px #111;
      }
      .cellbar {
        flex: none;
        width: 297px;
        align-self: stretch;
        border-right: 2px solid #3d4143;
        padding: 3px 0 0 9px;
      }
      .cellbar:first-child {
        width: 296px;
      }
      .loop {
        background: linear-gradient(#52402b, #4a3927);
        border-right-color: #735a33;
      }
      .sec {
        flex: none;
        width: 371px;
        align-self: stretch;
        padding: 8px 0 0 8px;
        border-right: 1px solid #36393b;
        color: #66696b;
      }
      .flag {
        position: absolute;
        left: 0;
        bottom: 6px;
      }
      .sig .flag {
        bottom: 8px;
      }
      .one {
        padding: 4px 0 0 12px;
      }
      .grid {
        --beat: #ffffff08;
        --bar: #ffffff16;
        background-image: linear-gradient(
          90deg,
          transparent 36px, var(--beat) 36px 38px,
          transparent 38px 73px, var(--beat) 73px 75px,
          transparent 75px 110px, var(--beat) 110px 112px,
          transparent 112px 147px, var(--bar) 147px 149px,
          transparent 149px 184px, var(--beat) 184px 186px,
          transparent 186px 221px, var(--beat) 221px 223px,
          transparent 223px 258px, var(--beat) 258px 260px,
          transparent 260px 295px, var(--bar) 295px 297px
        );
        background-position: -1px 0;
        background-size: 297px 100%;
      }
      .overview {
        height: 44px;
        border: solid #000;
        border-width: 2px 0;
        background-color: #4d5256;
        background-clip: padding-box;
      }
      .lane {
        height: 218px;
        background-color: #1c1d1f;
        border-bottom: 2px solid #17181a;
      }
      .lane.volume {
        display: flex;
        flex-direction: column;
        background-color: #1d2123;
        border-bottom-color: #000;
      }
      .below {
        flex: 1;
        margin-top: 50px;
        border-top: 2px solid #f28f3f;
        background-color: #313538;
      }
      .rest {
        flex: 1;
        background: #17181a;
      }
    `,
  ];

  private header(t: Track) {
    const audio = t.kind === "audio";
    return html`
      <div class="track ${t.kind}">
        <div class="tab"></div>
        <div class="body">
          <div class="strip">
            <input class="title" type="text" .value=${t.name} aria-label="Track name" />
            ${audio
              ? html`
                  <button class="btn rec" aria-label="Record enable">
                    <svg width="20" height="20" viewBox="0 0 20 20"><circle cx="10" cy="10" r="8.200" fill="none" stroke="#c8101c" stroke-width="1.600" /><circle cx="10" cy="10" r="5.700" fill="#c8000f" /></svg>
                  </button>
                  <button class="btn">I</button>
                  <button class="btn">S</button>
                `
              : html`<button class="btn">SPILL</button><span class="skip"></span>`}
            <button class="btn">M</button>
          </div>
          <div class="detail">
            <div class="fields">
              ${t.fields.map(
                (f) => html`<button class=${classMap({ field: true, auto: !!f.auto })}><span>${f.label}</span>${f.value}</button>`
              )}
            </div>
            <div class="right">
              <div class="levels">
                <div class="vol"><span>VOL</span><button>0 dB</button></div>
                <div class=${audio ? "mono" : "stereo"}>
                  ${audio ? html`<span>PAN</span>` : nothing}
                  ${t.pan.map((p) => html`<button>${p}</button>`)}
                </div>
              </div>
              <input class="fader" type="range" min="0" max="100" value="77" aria-label="${t.name} volume" />
              ${audio
                ? html`<div class="fields io">
                    <button class="field lit"><span>IN</span>MIC/LINE/HIZ 1</button>
                    <button class="field"><span>OUT</span>MAIN</button>
                  </div>`
                : nothing}
            </div>
          </div>
        </div>
        <div class="meter">${(audio ? [0] : [0, 1]).map(() => html`<i></i>`)}</div>
      </div>
    `;
  }

  private corner(fill: string) {
    return html`<svg width="12" height="12" viewBox="0 0 12 12"><path d="M12 0V12H0Z" fill=${fill} /></svg>`;
  }

  render() {
    return html`
      <div class="heads">
        <div class="rulers">
          <button class="menu" aria-label="Ruler options">
            <svg width="12" height="36" viewBox="0 0 12 36"><g fill="#dff4fc" stroke="#25292b" stroke-width="1"><circle cx="6" cy="6" r="4.500" /><circle cx="6" cy="18" r="4.500" /><circle cx="6" cy="30" r="4.500" /></g></svg>
          </button>
          <div class="names">
            <div class="name">LOOP</div>
            <div class="name bars">
              <span class="grow">BARS I BEATS</span>
              <svg class="link" width="38" height="28" viewBox="0 0 38 28">
                <g fill="none">
                  <rect x="3" y="4" width="21" height="13" rx="6.500" stroke="#2a2d2f" stroke-width="7" />
                  <rect x="14" y="11" width="21" height="13" rx="6.500" stroke="#2a2d2f" stroke-width="7" />
                  <rect x="3" y="4" width="21" height="13" rx="6.500" stroke="#ffae26" stroke-width="4.500" />
                  <path d="M19 11H28.500A6.500 6.500 0 0 1 28.500 24H20.500A6.500 6.500 0 0 1 14 19" stroke="#2a2d2f" stroke-width="7" />
                  <path d="M14 17.500A6.500 6.500 0 0 1 20.500 11H28.500A6.500 6.500 0 0 1 28.500 24H20.500A6.500 6.500 0 0 1 14 17.500" stroke="#ffae26" stroke-width="4.500" />
                  <path d="M10 17H23" stroke="#ffae26" stroke-width="4" stroke-linecap="round" />
                </g>
              </svg>
              <button class="pad">GRID<b>/4</b>${this.corner("#b9bbbc")}</button>
              <button class="pad snap">SNAP${this.corner("#b9bbbc")}</button>
            </div>
            <div class="name">MIN:SEC</div>
            <div class="name">
              <span class="grow">TEMPO</span>
              <svg class="go" width="12" height="20" viewBox="0 0 12 20"><path d="M2 2L9.500 10L2 18" fill="none" stroke="#a9bac2" stroke-width="3" /></svg>
            </div>
            <div class="name">SIGNATURE</div>
            <div class="name">MARKERS</div>
          </div>
        </div>
        <div class="tracksbar">
          <button class="sort" aria-label="Track size">
            <svg width="36" height="32" viewBox="0 0 36 32">
              <path d="M0 0H20V32H0Z" fill="#2c3133" />
              <path d="M2 2H18V6H2ZM2 8.500H18V14H2ZM2 16H18V30H2Z" fill="#dff4fc" />
              <path d="M33.500 20V30.500H23Z" fill="#dff4fc" stroke="#2c3133" />
            </svg>
          </button>
          <span class="t">TRACKS</span>
          <button class="cols" aria-label="Column layout">
            <svg width="32" height="24" viewBox="0 0 32 24">
              <path d="M0 0H32V24H0Z" fill="#2c3133" />
              <path d="M2 2H14V22H2ZM28 2H30V22H28Z" fill="#dff4fc" />
              <path d="M16 2H26V22H16Z" fill="#8b969b" />
            </svg>
          </button>
        </div>
        ${TRACKS.map((t) => this.header(t))}
        <div class="void"></div>
      </div>

      <div class="cursor"><div class="dim"></div></div>

      <div class="time">
        <div class="lines">
          <div class="ruler"><div class="cellbar loop"></div><div class="cellbar"></div></div>
          <div class="ruler">
            <div class="cellbar">1</div><div class="cellbar">3</div><div class="cellbar">5</div>
            <svg class="flag" width="12" height="20" viewBox="0 0 12 20"><path d="M0 0H1L11 10L1 20H0Z" fill="#fff" /></svg>
          </div>
          <div class="ruler"><div class="sec">0:00</div><div class="sec">0:05</div><div class="sec">0:10</div></div>
          <div class="ruler one">120.00</div>
          <div class="ruler one sig">
            4/4
            <svg class="flag" width="12" height="22" viewBox="0 0 12 22"><path d="M0 1L9 11L0 21Z" fill="#555759" stroke="#111" /></svg>
          </div>
          <div class="ruler"></div>
        </div>
        <div class="grid overview"></div>
        <div class="grid lane"></div>
        <div class="lane volume grid"><div class="below grid"></div></div>
        <div class="rest"></div>
      </div>
    `;
  }
}

@customElement("app-root")
class AppRoot extends LitElement {
  static styles = [
    base,
    css`
      :host {
        display: grid;
        grid-template-rows: auto minmax(0, 1fr);
        height: 100vh;
        overflow: hidden;
        background: #000;
      }
      main {
        display: grid;
        grid-template-columns: 510px 194px minmax(0, 1fr);
        grid-template-rows: minmax(0, 1fr);
        min-height: 0;
      }
    `,
  ];

  render() {
    return html`
      <ua-header></ua-header>
      <main>
        <ua-browser></ua-browser>
        <ua-strip></ua-strip>
        <ua-arranger></ua-arranger>
      </main>
    `;
  }
}
